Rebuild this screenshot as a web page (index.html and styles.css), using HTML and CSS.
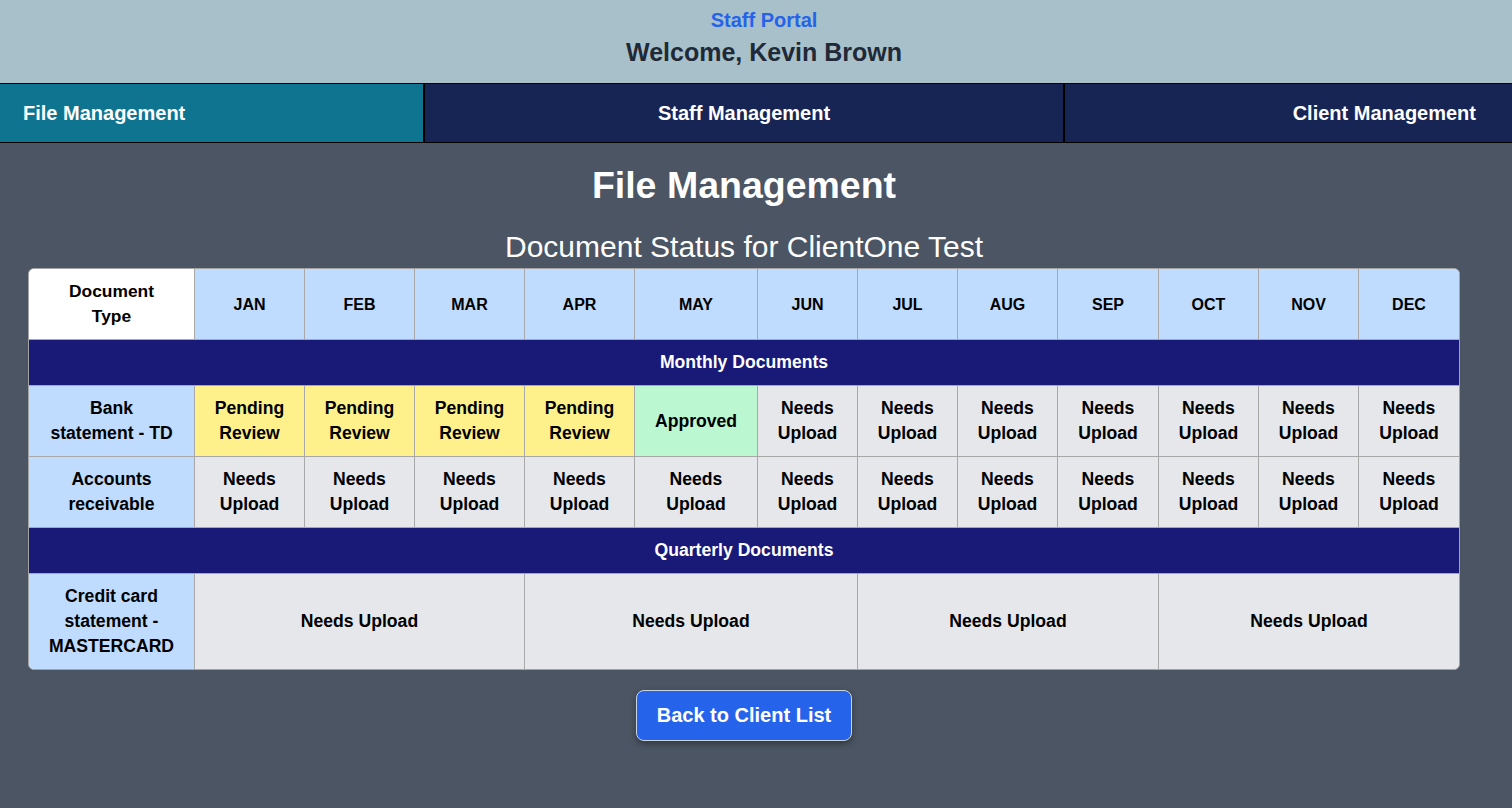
FILE: index.html
```html
<!DOCTYPE html>
<html lang="en">
<head>
<meta charset="utf-8">
<title>Staff Portal - File Management</title>
<link rel="stylesheet" href="styles.css">
</head>
<body>
<header class="top">
  <div class="portal">Staff Portal</div>
  <div class="welcome">Welcome, Kevin Brown</div>
</header>
<nav class="nav">
  <a class="nav-item nav-file active">File Management</a>
  <a class="nav-item nav-staff">Staff Management</a>
  <a class="nav-item nav-client">Client Management</a>
</nav>
<main class="main">
  <h1 class="title">File Management</h1>
  <h2 class="subtitle">Document Status for ClientOne Test</h2>
  <div class="table-wrap">
    <table class="status">
      <colgroup>
        <col class="c-type">
        <col class="c-110"><col class="c-110"><col class="c-110"><col class="c-110">
        <col class="c-123">
        <col class="c-100"><col class="c-100"><col class="c-100">
        <col class="c-101">
        <col class="c-100"><col class="c-100"><col class="c-100">
      </colgroup>
      <thead>
        <tr>
          <th class="doc-head">Document Type</th>
          <th>JAN</th><th>FEB</th><th>MAR</th><th>APR</th><th>MAY</th><th>JUN</th>
          <th>JUL</th><th>AUG</th><th>SEP</th><th>OCT</th><th>NOV</th><th class="last">DEC</th>
        </tr>
      </thead>
      <tbody>
        <tr class="section"><td colspan="13" class="last">Monthly Documents</td></tr>
        <tr>
          <td class="type">Bank statement - TD</td>
          <td class="pending">Pending Review</td>
          <td class="pending">Pending Review</td>
          <td class="pending">Pending Review</td>
          <td class="pending">Pending Review</td>
          <td class="approved">Approved</td>
          <td class="needs">Needs Upload</td>
          <td class="needs">Needs Upload</td>
          <td class="needs">Needs Upload</td>
          <td class="needs">Needs Upload</td>
          <td class="needs">Needs Upload</td>
          <td class="needs">Needs Upload</td>
          <td class="needs last">Needs Upload</td>
        </tr>
        <tr>
          <td class="type">Accounts receivable</td>
          <td class="needs">Needs Upload</td>
          <td class="needs">Needs Upload</td>
          <td class="needs">Needs Upload</td>
          <td class="needs">Needs Upload</td>
          <td class="needs">Needs Upload</td>
          <td class="needs">Needs Upload</td>
          <td class="needs">Needs Upload</td>
          <td class="needs">Needs Upload</td>
          <td class="needs">Needs Upload</td>
          <td class="needs">Needs Upload</td>
          <td class="needs">Needs Upload</td>
          <td class="needs last">Needs Upload</td>
        </tr>
        <tr class="section"><td colspan="13" class="last">Quarterly Documents</td></tr>
        <tr class="final">
          <td class="type">Credit card statement - MASTERCARD</td>
          <td class="needs" colspan="3">Needs Upload</td>
          <td class="needs" colspan="3">Needs Upload</td>
          <td class="needs" colspan="3">Needs Upload</td>
          <td class="needs last" colspan="3">Needs Upload</td>
        </tr>
      </tbody>
    </table>
  </div>
  <div class="actions">
    <button class="back-btn" type="button">Back to Client List</button>
  </div>
</main>
</body>
</html>
```

FILE: styles.css
```css
* { box-sizing: border-box; }

html, body {
  margin: 0;
  padding: 0;
}

body {
  font-family: "Liberation Sans", Arial, sans-serif;
  background: #4b5563;
  min-height: 808px;
}

.top {
  background: #a8c0c9;
  height: 83px;
  padding: 8px 0 0 16px;
  text-align: center;
}

.portal {
  color: #2563eb;
  font-weight: bold;
  font-size: 20px;
  line-height: 24px;
}

.welcome {
  color: #1f2937;
  font-weight: bold;
  font-size: 25px;
  line-height: 30px;
  margin-top: 5px;
}

.nav {
  display: flex;
  height: 60px;
  border-top: 1px solid #000;
  border-bottom: 1px solid #000;
  background: #172554;
}

.nav-item {
  display: flex;
  align-items: center;
  color: #fff;
  font-weight: bold;
  font-size: 20px;
  text-decoration: none;
  background: #172554;
}

.nav-item.active { background: #0e7490; }

.nav-file {
  width: 423px;
  padding-left: 23px;
}

.nav-staff {
  width: 642px;
  border-left: 2px solid #000;
  border-right: 2px solid #000;
  justify-content: center;
}

.nav-client {
  flex: 1;
  justify-content: flex-end;
  padding-right: 36px;
}

.main {
  width: 1488px;
  padding: 20px 28px 40px;
  text-align: center;
}

.title {
  margin: 0;
  color: #fff;
  font-size: 37.5px;
  line-height: 44px;
  font-weight: bold;
}

.subtitle {
  margin: 22px 0 3px;
  color: #fff;
  font-size: 30px;
  line-height: 36px;
  font-weight: normal;
}

.table-wrap {
  border: 1px solid #a3a3a3;
  border-radius: 6px;
  overflow: hidden;
  background: #e5e7eb;
}

.status {
  width: 100%;
  table-layout: fixed;
  border-collapse: separate;
  border-spacing: 0;
  color: #000;
  font-weight: bold;
  font-size: 17.6px;
  line-height: 25px;
}

.c-type { width: 166px; }
.c-110 { width: 110px; }
.c-123 { width: 123px; }
.c-100 { width: 100px; }
.c-101 { width: 101px; }

.status th,
.status td {
  padding: 10px 4px;
  text-align: center;
  vertical-align: middle;
  border-right: 1px solid #a8a8a8;
  border-bottom: 1px solid #a8a8a8;
  font-weight: bold;
}

.status .last { border-right: none; }
.status tr.final td { border-bottom: none; }

.status th {
  background: #bfdbfe;
  font-size: 16px;
}

.status th.doc-head {
  background: #fff;
  font-size: 17.4px;
  padding: 10px 18px;
}

.status td.type {
  background: #bfdbfe;
  padding: 10px 18px;
}
.status td.pending { background: #fef08a; }
.status td.approved { background: #bbf7d0; }
.status td.needs { background: #e5e7eb; }

.status tr.section td {
  background: #191978;
  color: #fff;
  padding: 10px 4px;
}

.actions {
  margin-top: 20px;
  display: flex;
  justify-content: center;
}

.back-btn {
  font-family: "Liberation Sans", Arial, sans-serif;
  font-weight: bold;
  font-size: 20px;
  line-height: 23px;
  color: #fff;
  background: #2563eb;
  border: 1px solid #cbd5e1;
  border-radius: 8px;
  padding: 13px 20px;
  white-space: nowrap;
  height: 51px;
  box-shadow: 0 3px 6px rgba(0, 0, 0, 0.35);
  cursor: pointer;
}
```
